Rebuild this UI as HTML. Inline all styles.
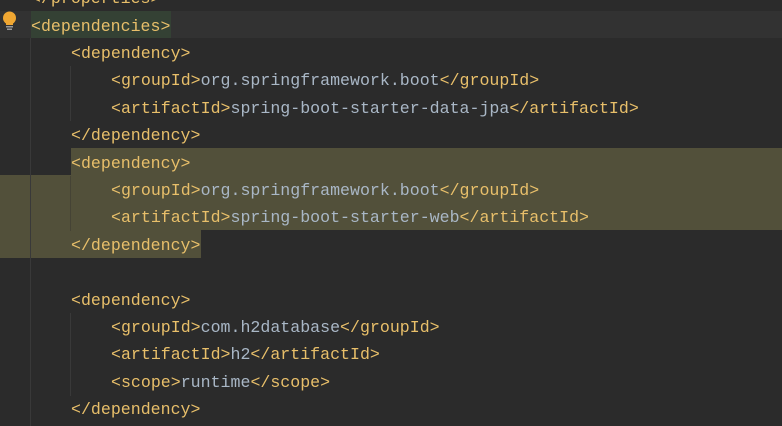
<!DOCTYPE html>
<html><head><style>
html,body{margin:0;padding:0;background:#2b2b2b;width:782px;height:426px;overflow:hidden;position:relative}
.l{position:absolute;left:0;height:27.4px;line-height:27.4px;font-family:"Liberation Mono",monospace;font-size:16.6px;color:#e8bf6a;white-space:pre;margin-top:1.5px}
.t{color:#a9b7c6}
.bg{position:absolute}
</style></head><body>
<div class="bg" style="left:0;top:11px;width:782px;height:27px;background:#323232"></div>
<div class="bg" style="left:31px;top:11px;width:140px;height:27px;background:#344134"></div>
<div class="bg" style="left:71px;top:148px;width:711px;height:27.4px;background:#52503a"></div>
<div class="bg" style="left:0;top:175.4px;width:782px;height:55px;background:#52503a"></div>
<div class="bg" style="left:0;top:230.4px;width:201px;height:27.4px;background:#52503a"></div>
<div class="bg" style="left:30px;top:38px;width:1px;height:388px;background:#393939"></div>
<div class="bg" style="left:70px;top:66px;width:1px;height:55px;background:#393939"></div>
<div class="bg" style="left:70px;top:176px;width:1px;height:55px;background:#454335"></div>
<div class="bg" style="left:70px;top:313px;width:1px;height:83px;background:#393939"></div>
<svg style="position:absolute;left:1px;top:11px" width="18" height="20" viewBox="0 0 18 20"><circle cx="8.5" cy="7" r="6.5" fill="#f0a732"/><rect x="5" y="11" width="7" height="3" fill="#f0a732"/><rect x="5" y="15" width="7" height="1.5" fill="#9a9a9a"/><rect x="6" y="17.5" width="5" height="1.5" fill="#9a9a9a"/></svg>
<div class="l" style="top:-16.4px;left:31px">&lt;/properties&gt;</div>
<div class="l" style="top:11px;left:31px">&lt;dependencies&gt;</div>
<div class="l" style="top:38.4px;left:71px">&lt;dependency&gt;</div>
<div class="l" style="top:65.8px;left:111px">&lt;groupId&gt;<span class="t">org.springframework.boot</span>&lt;/groupId&gt;</div>
<div class="l" style="top:93.2px;left:111px">&lt;artifactId&gt;<span class="t">spring-boot-starter-data-jpa</span>&lt;/artifactId&gt;</div>
<div class="l" style="top:120.6px;left:71px">&lt;/dependency&gt;</div>
<div class="l" style="top:148px;left:71px">&lt;dependency&gt;</div>
<div class="l" style="top:175.4px;left:111px">&lt;groupId&gt;<span class="t">org.springframework.boot</span>&lt;/groupId&gt;</div>
<div class="l" style="top:202.8px;left:111px">&lt;artifactId&gt;<span class="t">spring-boot-starter-web</span>&lt;/artifactId&gt;</div>
<div class="l" style="top:230.2px;left:71px">&lt;/dependency&gt;</div>
<div class="l" style="top:285px;left:71px">&lt;dependency&gt;</div>
<div class="l" style="top:312.4px;left:111px">&lt;groupId&gt;<span class="t">com.h2database</span>&lt;/groupId&gt;</div>
<div class="l" style="top:339.8px;left:111px">&lt;artifactId&gt;<span class="t">h2</span>&lt;/artifactId&gt;</div>
<div class="l" style="top:367.2px;left:111px">&lt;scope&gt;<span class="t">runtime</span>&lt;/scope&gt;</div>
<div class="l" style="top:394.6px;left:71px">&lt;/dependency&gt;</div>
</body></html>
